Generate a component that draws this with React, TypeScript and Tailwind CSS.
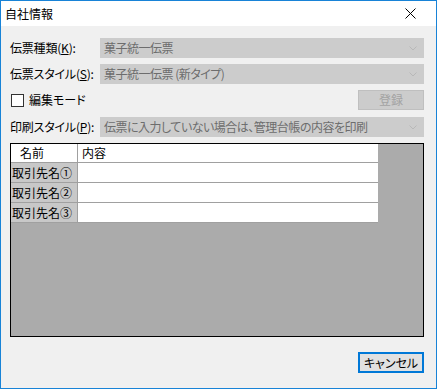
import React from 'react'

const FONT = { fontFamily: '"Noto Sans CJK JP", "Noto Sans", sans-serif' }

function Chevron() {
  return (
    <svg width="8" height="5" viewBox="0 0 8 5" className="shrink-0">
      <path d="M0.5 0.5 L4 4 L7.5 0.5" fill="none" stroke="#b8b8b8" strokeWidth="1" />
    </svg>
  )
}

function Combo({ text }: { text: string }) {
  return (
    <div className="flex h-[20px] w-[324px] shrink-0 items-center justify-between bg-[#cccccc] pl-[4px] pr-[7px] text-[12px] leading-none text-[#6d6d6d]">
      <span className="whitespace-nowrap tracking-[-0.5px] [font-feature-settings:'palt']">{text}</span>
      <Chevron />
    </div>
  )
}

function Label({ text, mnemonic }: { text: string; mnemonic: string }) {
  return (
    <div className="w-[90px] shrink-0 whitespace-nowrap text-[12px] leading-none tracking-[-0.2px] text-black [font-feature-settings:'palt']">
      {text}(<span className="underline underline-offset-1">{mnemonic}</span>):
    </div>
  )
}

const rows = ['取引先名①', '取引先名②', '取引先名③']

export default function App() {
  return (
    <div
      style={FONT}
      className="flex h-[389px] w-[437px] flex-col border border-[#1883d7] bg-[#f0f0f0]"
    >
      {/* title bar */}
      <div className="flex h-[25px] shrink-0 items-center justify-between bg-white pl-[4px] pr-[20px]">
        <span className="text-[12px] leading-none text-black">自社情報</span>
        <svg width="11" height="11" viewBox="0 0 11 11">
          <path d="M0.5 0.5 L10.5 10.5 M10.5 0.5 L0.5 10.5" stroke="#000" strokeWidth="1" />
        </svg>
      </div>

      <div className="flex flex-1 flex-col pl-[9px] pr-[12px]">
        <div className="mt-[12px] flex items-center">
          <Label text="伝票種類" mnemonic="K" />
          <Combo text="菓子統一伝票" />
        </div>
        <div className="mt-[6px] flex items-center">
          <Label text="伝票スタイル" mnemonic="S" />
          <Combo text="菓子統一伝票 (新タイプ)" />
        </div>
        <div className="mt-[6px] flex h-[20px] items-center justify-between">
          <div className="flex items-center gap-[5px] pl-[1px]">
            <div className="h-[13px] w-[13px] border border-[#333333] bg-white" />
            <span className="text-[12px] leading-none text-black [font-feature-settings:'palt']">編集モード</span>
          </div>
          <div className="flex h-[20px] w-[66px] items-center justify-center border border-[#bfbfbf] bg-[#cccccc] text-[12px] leading-none text-[#a3a3a3]">
            登録
          </div>
        </div>
        <div className="mt-[7px] flex items-center">
          <Label text="印刷スタイル" mnemonic="P" />
          <Combo text="伝票に入力していない場合は、管理台帳の内容を印刷" />
        </div>

        {/* grid */}
        <div className="mt-[6px] h-[194px] w-[414px] border border-black bg-[#ababab]">
          <div className="w-[367px] text-[12px] leading-none text-black">
            <div className="flex h-[19px] border-b border-[#a0a0a0] bg-white">
              <div className="flex w-[67px] items-center border-r border-[#a0a0a0] pl-[9px]">名前</div>
              <div className="flex flex-1 items-center pl-[4px]">内容</div>
            </div>
            {rows.map((r) => (
              <div key={r} className="flex h-[20px] border-b border-[#a0a0a0]">
                <div className="flex w-[67px] items-center whitespace-nowrap border-r border-[#a0a0a0] bg-[#c8c8c8] pl-[1px]">
                  {r}
                </div>
                <div className="flex-1 bg-white" />
              </div>
            ))}
          </div>
        </div>

        <div className="mt-[15px] flex justify-end">
          <div className="flex h-[21px] w-[66px] items-center justify-center border-2 border-[#0078d7] bg-[#e1e1e1] text-[12px] leading-none text-black [font-feature-settings:'palt']">
            キャンセル
          </div>
        </div>
      </div>
    </div>
  )
}
